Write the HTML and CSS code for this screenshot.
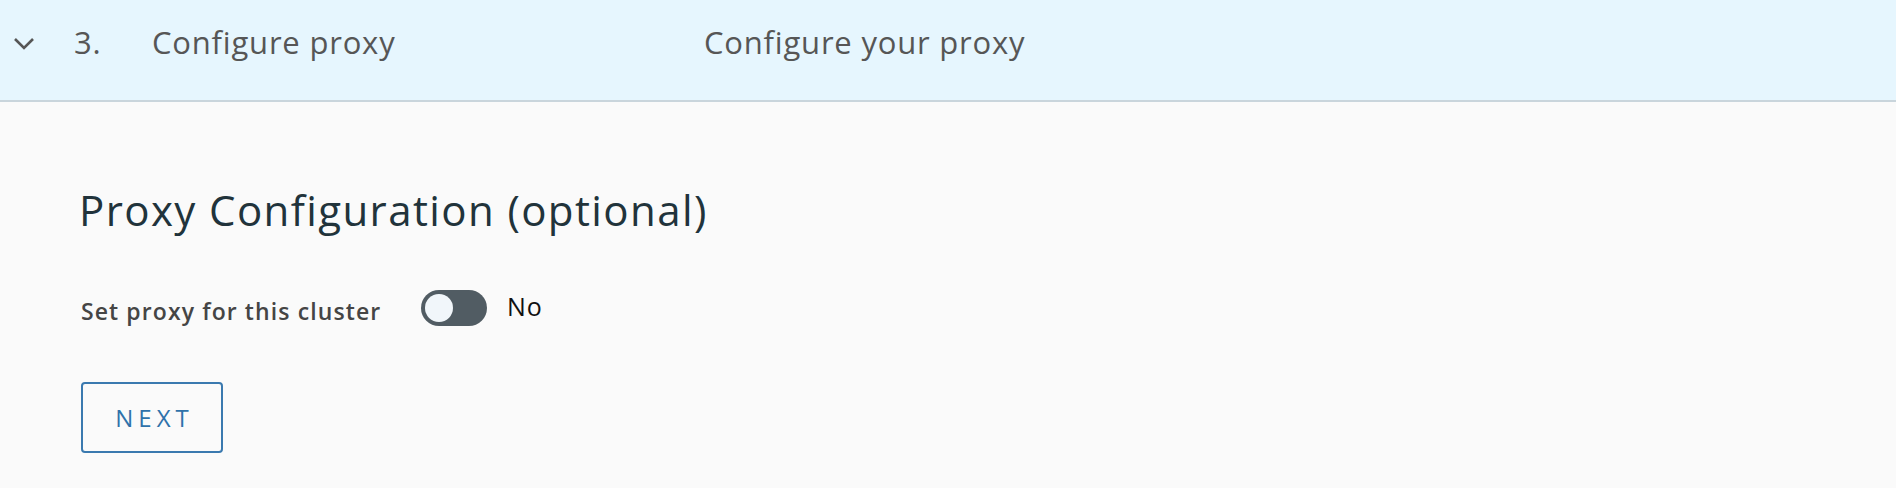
FILE: index.html
```html
<!DOCTYPE html>
<html>
<head>
<meta charset="utf-8">
<link rel="stylesheet" href="styles.css">
</head>
<body>
<div class="step">
  <div class="step-header">
    <span class="chevron">
      <svg width="22" height="14" viewBox="0 0 22 14"><path d="M2 2 L11 11 L20 2" fill="none" stroke="#565656" stroke-width="2.6"/></svg>
    </span>
    <span class="step-num">3.</span>
    <span class="step-title">Configure proxy</span>
    <span class="step-desc">Configure your proxy</span>
  </div>
  <div class="step-body">
    <h2 class="section-title">Proxy Configuration (optional)</h2>
    <div class="form-row">
      <label class="form-label">Set proxy for this cluster</label>
      <span class="toggle"><span class="knob"></span></span>
      <span class="toggle-text">No</span>
    </div>
    <button class="btn-next">NEXT</button>
  </div>
</div>
</body>
</html>
```
FILE: styles.css
```css
html, body {
  margin: 0;
  padding: 0;
  background: #fafafa;
  font-family: "Open Sans", "Liberation Sans", sans-serif;
}
.step {
  width: 100%;
}
.step-header {
  height: 102px;
  padding-bottom: 17px;
  box-sizing: border-box;
  background: #e6f6fe;
  border-bottom: 2px solid #c9d5dc;
  display: flex;
  align-items: center;
  color: #565656;
  font-size: 31px;
  letter-spacing: 0.8px;
}
.chevron {
  width: 22px;
  margin-left: 13px;
  margin-top: 5px;
  display: flex;
  align-items: center;
}
.chevron svg { display: block; }
.step-num {
  margin-left: 39px;
  width: 78px;
}
.step-title {
  width: 552px;
}
.step-body {
  padding: 0 0 0 81px;
}
.section-title {
  margin: 0 0 0 -2px;
  padding-top: 78px;
  font-weight: 400;
  font-size: 42px;
  letter-spacing: 1.4px;
  color: #21333b;
  line-height: 60px;
}
.form-row {
  display: flex;
  align-items: center;
  margin-top: 50px;
  height: 36px;
}
.form-label {
  font-weight: 600;
  font-size: 23px;
  letter-spacing: 1.1px;
  color: #454545;
  width: 340px;
  padding-top: 6px;
}
.toggle {
  width: 66px;
  height: 36px;
  border-radius: 18px;
  background: #515c63;
  display: flex;
  align-items: center;
  padding-left: 4px;
  box-sizing: border-box;
}
.knob {
  width: 28px;
  height: 28px;
  border-radius: 50%;
  background: #f1f6fa;
}
.toggle-text {
  margin-left: 20px;
  font-size: 25px;
  letter-spacing: 1px;
  color: #111;
  padding-bottom: 4px;
}
.btn-next {
  margin-top: 56px;
  width: 142px;
  height: 71px;
  border: 2px solid #3a79af;
  border-radius: 4px;
  background: transparent;
  color: #2f72aa;
  font-family: "Open Sans", "Liberation Sans", sans-serif;
  font-size: 24px;
  letter-spacing: 5px;
  padding: 0 0 0 5px;
}
```
